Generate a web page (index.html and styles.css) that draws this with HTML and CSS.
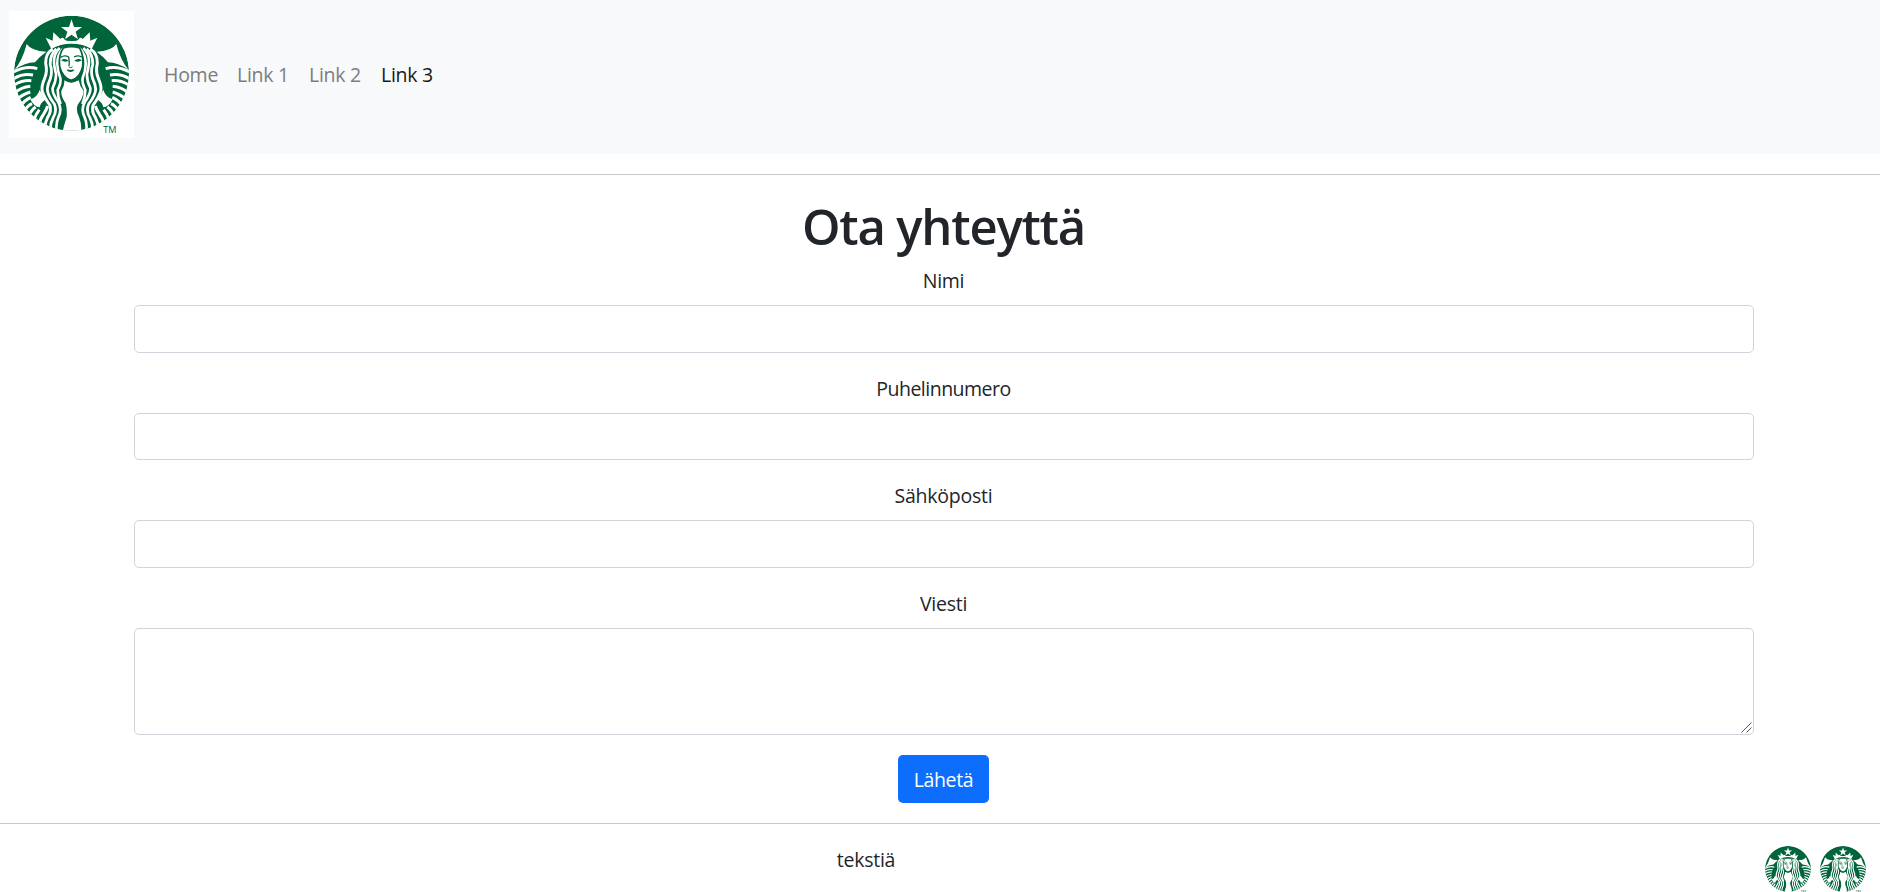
FILE: index.html
```html
<!DOCTYPE html>
<html lang="fi">
<head>
<meta charset="utf-8">
<title>Ota yhteyttä</title>
<link rel="stylesheet" href="styles.css">
</head>
<body>
<svg class="defs" aria-hidden="true">
  <defs>
    <clipPath id="disc"><circle cx="214.500" cy="220" r="172.500"/></clipPath>
    <g id="half" fill="none" stroke="#fff" stroke-width="9">
      <path fill="#fff" stroke="none" d="M80 132 Q94 153 139 155 Q118 170 105 187 Q75 187 43 210 Q68 180 80 132Z"/>
      <path d="M40 216 Q78 196 112 206"/>
      <path d="M38 238 Q66 219 99 225"/>
      <path d="M38 259 Q62 240 94 242"/>
      <path d="M43 280 Q62 262 91 259"/>
      <path d="M50 299 Q67 283 91 276"/>
      <path d="M61 318 Q73 301 92 292"/>
      <path fill="#fff" stroke="none" d="M91 298 Q113 291 119 269 Q128 288 137 298 Q121 309 119 322 Q103 322 91 298Z"/>
      <path d="M72 335 Q82 317 96 311"/>
      <path d="M85 350 Q94 330 107 321"/>
      <path d="M101 364 Q106 344 118 329"/>
      <path d="M117 376 Q120 356 130 344 Q140 328 143 318"/>
      <path d="M134 387 Q134 369 143 352 Q155 334 150 316 Q133 293 127 274 Q123 260 134 235 Q143 214 137 190 Q136 161 158 147"/>
      <path stroke-width="8.500" d="M152 394 Q149 374 159 354 Q172 333 163 312 Q142 285 142 267 Q143 253 151 236 Q158 216 151 194 Q149 166 169 146"/>
      <path stroke-width="8" d="M171 397 Q166 372 175 352 Q187 329 175 307 Q156 280 158 264 Q169 242 168 222 Q162 198 162 184 Q162 160 179 144"/>
      <path stroke-width="8" d="M182 312 Q173 291 173 270 Q184 248 181 234 Q172 213 172 192 Q171 164 190 145"/>
      <path fill="#fff" stroke="none" d="M137 113 L158 122 L160 97 L181 117 Q189 108 194 119 Q198 124 215 123 V131 Q180 131 154 147Z"/>
    </g>
    <symbol id="siren" viewBox="27 33 375 381" preserveAspectRatio="none">
      <rect x="27" y="33" width="375" height="381" fill="#fff"/>
      <g clip-path="url(#disc)">
        <circle cx="214.500" cy="220" r="172.500" fill="#00653b"/>
        <path fill="#fff" d="M193 241 Q214 252 236 241 Q239 258 251 273 Q248 297 234 313 Q226 330 237 350 Q246 373 243 398 H187 Q193 372 200 351 Q202 329 197 310 Q182 290 184 272 Q194 259 193 241Z"/>
        <use href="#half"/>
        <use href="#half" transform="translate(429 0) scale(-1 1)"/>
        <path fill="#fff" stroke="#00653b" stroke-width="5" d="M190 144 Q214 136 239 144 Q252 168 248 199 Q240 235 213 241 Q187 232 179 199 Q175 165 190 144Z"/>
        <path fill="#fff" d="M214.500 58 L222 81 L246 81 L227 95 L234 118 L214.500 104 L195 118 L202 95 L183 81 L207 81Z"/>
        <path fill="none" stroke="#00653b" stroke-width="4" d="M182 172 Q194 164 206 171 Q209 187 207 198 M222 171 Q236 164 246 172"/>
        <path fill="#00653b" d="M183 181 Q195 172 206 182 Q196 189 183 181Z M223 182 Q234 172 246 181 Q234 189 223 182Z M205 198 Q212 204 219 198 L216 203 H208Z M199 210 Q205 207 211 210 Q218 207 224 210 Q212 222 199 210Z M180 207 Q192 238 213 240 Q234 237 247 207 Q244 246 214 248 Q184 246 180 207Z"/>
      </g>
      <text x="310" y="399" class="tm" textLength="39" lengthAdjust="spacingAndGlyphs">TM</text>
    </symbol>
  </defs>
</svg>
<nav class="navbar">
  <svg class="brand"><use href="#siren"/></svg>
  <div class="links">
    <a class="link home">Home</a>
    <a class="link">Link 1</a>
    <a class="link">Link 2</a>
    <a class="link active">Link 3</a>
  </div>
</nav>
<hr class="rule">
<form class="contact">
  <h1 class="title">Ota yhteyttä</h1>
  <label class="label" for="name">Nimi</label>
  <input class="field" id="name" type="text">
  <label class="label tight" for="phone">Puhelinnumero</label>
  <input class="field" id="phone" type="text">
  <label class="label" for="mail">Sähköposti</label>
  <input class="field" id="mail" type="text">
  <label class="label" for="message">Viesti</label>
  <div class="message">
    <textarea class="field area" id="message" rows="3"></textarea>
    <svg class="grip" viewBox="0 0 11 11"><path d="M.5 10.500 L10.500 .5 M5.500 10.500 L10.500 5.500"/></svg>
  </div>
  <button class="submit" type="button">Lähetä</button>
</form>
<hr class="rule">
<footer class="footer">
  <p class="note">tekstiä</p>
  <div class="marks">
    <svg class="mark"><use href="#siren"/></svg>
    <svg class="mark"><use href="#siren"/></svg>
  </div>
</footer>
</body>
</html>
```
FILE: styles.css
```css
* { box-sizing: border-box; }
body {
  margin: 0;
  height: 892px;
  overflow: hidden;
  background: #fff;
  color: #212529;
  font: 400 19.5px/30px "Open Sans", "Noto Sans", sans-serif;
  letter-spacing: -0.25px;
}
.defs { position: absolute; width: 0; height: 0; }
.tm { font: 27px "Open Sans", sans-serif; fill: #00653b; }
.navbar {
  display: flex;
  align-items: center;
  height: 154px;
  padding: 0 9px 5px;
  background: #f8f9fa;
}
.brand { width: 125px; height: 127px; }
.links { display: flex; gap: 20px; margin-left: 30px; padding-top: 1px; }
.link { width: 52px; color: #7c7d7d; white-space: nowrap; }
.home { width: 53px; }
.active { color: #191919; }
.rule { height: 1px; margin: 20px 0; border: 0; background: #c8c9ca; }
.contact {
  display: flex;
  flex-direction: column;
  align-items: center;
  width: 1620px;
  margin: 0 0 0 133.5px;
}
.title {
  margin: 0;
  padding: 1px 0 9px;
  font-size: 49px;
  line-height: 60px;
  font-weight: 600;
  letter-spacing: -1.2px;
}
.label { padding: 1px 0 9px; }
.tight { letter-spacing: -0.5px; }
.field {
  display: block;
  width: 100%;
  height: 47.5px;
  margin: 0 0 20px;
  padding: 7.5px 15px;
  border: 1px solid #ced4da;
  border-radius: 5px;
  background: #fff;
  font: inherit;
}
.message { position: relative; width: 100%; }
.area { height: 107.5px; resize: none; }
.grip {
  position: absolute;
  right: 2px;
  bottom: 22px;
  width: 11px;
  height: 11px;
  fill: none;
  stroke: #555;
}
.submit {
  width: 91px;
  height: 47.5px;
  padding: 2px 0 0;
  border: 0;
  border-radius: 5px;
  background: #0d6efd;
  color: #fff;
  font: inherit;
  letter-spacing: -0.4px;
}
.footer { display: flex; justify-content: space-between; padding: 0 12px 0 0; }
.note { flex: 1; margin: 0 31px 0 0; padding-top: 1px; text-align: center; }
.marks { display: flex; gap: 5px; }
.mark { width: 50px; height: 51px; }
```
